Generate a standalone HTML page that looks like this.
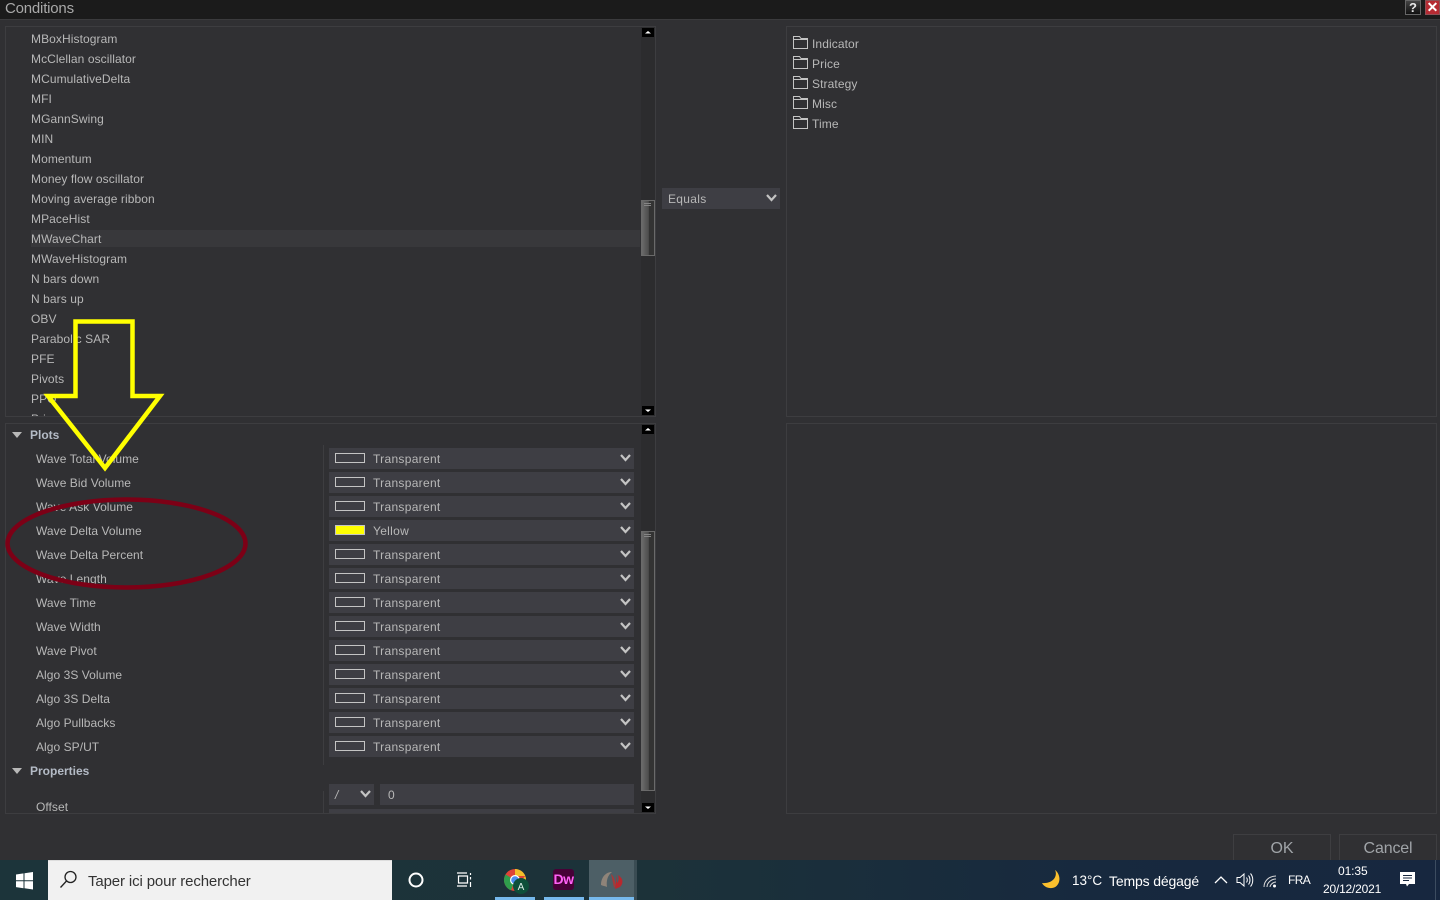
<!DOCTYPE html>
<html><head><meta charset="utf-8"><title>Conditions</title>
<style>
html,body{margin:0;padding:0;width:1440px;height:900px;overflow:hidden;background:#303033}
body{position:relative;font-family:"Liberation Sans",sans-serif;font-size:12px;color:#b8b8b8}
div,span,svg{position:absolute}
.p{border:1px solid #3d3d40;box-sizing:border-box;overflow:hidden;background:#303033}
.l{left:25px;height:20px;line-height:20px;white-space:nowrap;letter-spacing:.08px}
.n{left:30px;height:24px;line-height:24px;white-space:nowrap;letter-spacing:.05px}
.d{left:323px;width:305px;height:21px;background:#3e3e44}
.d span{left:44px;top:1px;line-height:21px;letter-spacing:.3px;white-space:nowrap}
.d i{position:absolute;left:6px;top:5px;width:28px;height:8px;border:1px solid #c4c4c4;display:block}
.d svg{left:291px;top:6px}
.sb{background:#2c2c2e}
.b{background:#000;width:12px;height:9px}
.t{left:812px;height:20px;line-height:20px;white-space:nowrap;letter-spacing:.1px}
.btn{top:834px;height:26px;border:1px solid #3e3e41;border-bottom:0;box-sizing:border-box;text-align:center;line-height:27px;font-size:16px;color:#a0a4a8}
.th{background:linear-gradient(90deg,#6a6a6a,#4d4d4d 55%,#333 60%);border:1px solid #6a6a6a;box-sizing:border-box}
.tb{color:#fff;white-space:nowrap}
</style></head><body>

<div style="left:0;top:0;width:1440px;height:19px;background:#1b1b1b;border-bottom:1px solid #3b3b3d"></div>
<div style="left:5px;top:1px;height:16px;line-height:16px;font-size:15px;color:#a9a9a9;letter-spacing:-.2px">Conditions</div>
<div style="left:1405px;top:0;width:16px;height:15px;background:linear-gradient(#444,#111);border:1px solid #666;box-sizing:border-box;text-align:center;line-height:14px;font-size:13px;font-weight:bold;color:#e8e8e8">?</div>
<div style="left:1425px;top:0;width:15px;height:15px;background:#b52b33;border:1px solid #8c5055;box-sizing:border-box;text-align:center;line-height:13px;font-size:14px;font-weight:bold;color:#fff">✕</div>

<!-- Top-left list -->
<div class="p" style="left:5px;top:26px;width:651px;height:391px">
<div style="left:25px;top:203px;width:609px;height:17px;background:#38383b"></div>
<div class="l" style="top:2px">MBoxHistogram</div>
<div class="l" style="top:22px">McClellan oscillator</div>
<div class="l" style="top:42px">MCumulativeDelta</div>
<div class="l" style="top:62px">MFI</div>
<div class="l" style="top:82px">MGannSwing</div>
<div class="l" style="top:102px">MIN</div>
<div class="l" style="top:122px">Momentum</div>
<div class="l" style="top:142px">Money flow oscillator</div>
<div class="l" style="top:162px">Moving average ribbon</div>
<div class="l" style="top:182px">MPaceHist</div>
<div class="l" style="top:202px">MWaveChart</div>
<div class="l" style="top:222px">MWaveHistogram</div>
<div class="l" style="top:242px">N bars down</div>
<div class="l" style="top:262px">N bars up</div>
<div class="l" style="top:282px">OBV</div>
<div class="l" style="top:302px">Parabolic SAR</div>
<div class="l" style="top:322px">PFE</div>
<div class="l" style="top:342px">Pivots</div>
<div class="l" style="top:362px">PPO</div>
<div class="l" style="top:382px">Price</div>
<div class="sb" style="left:635px;top:0;width:14px;height:389px"></div>
<div class="th" style="left:635px;top:173px;width:14px;height:56px"></div>
<svg width="10" height="6" style="left:637px;top:175px"><path d="M1 1.500H8M1 3.500H8" stroke="#858585"/></svg>
<div class="b" style="left:636px;top:1px"><svg width="12" height="9" style="left:0;top:0"><path d="M3 5.500H9L6 3Z" fill="#fff"/></svg></div>
<div class="b" style="left:636px;top:379px"><svg width="12" height="9" style="left:0;top:0"><path d="M3 3.500H9L6 6Z" fill="#fff"/></svg></div>
</div>

<!-- Bottom-left properties -->
<div class="p" style="left:5px;top:423px;width:651px;height:391px">
<svg width="12" height="8" style="left:6px;top:8px"><path d="M0 0H10L5 6Z" fill="#b8b8b8"/></svg>
<div style="left:24px;top:1px;height:20px;line-height:20px;font-weight:bold;color:#b4bbc6">Plots</div>
<div style="left:317px;top:21px;width:1px;height:320px;background:#3d3d40"></div>
<div style="left:317px;top:367px;width:1px;height:23px;background:#3d3d40"></div>
<div class="n" style="top:23px">Wave Total Volume</div>
<div class="n" style="top:47px">Wave Bid Volume</div>
<div class="n" style="top:71px">Wave Ask Volume</div>
<div class="n" style="top:95px">Wave Delta Volume</div>
<div class="n" style="top:119px">Wave Delta Percent</div>
<div class="n" style="top:143px">Wave Length</div>
<div class="n" style="top:167px">Wave Time</div>
<div class="n" style="top:191px">Wave Width</div>
<div class="n" style="top:215px">Wave Pivot</div>
<div class="n" style="top:239px">Algo 3S Volume</div>
<div class="n" style="top:263px">Algo 3S Delta</div>
<div class="n" style="top:287px">Algo Pullbacks</div>
<div class="n" style="top:311px">Algo SP/UT</div>

<div class="d" style="top:24px"><i></i><span>Transparent</span><svg width="12" height="8"><path d="M1 1L5.500 6L10 1" fill="none" stroke="#c4c4c4" stroke-width="2.200"/></svg></div>
<div class="d" style="top:48px"><i></i><span>Transparent</span><svg width="12" height="8"><path d="M1 1L5.500 6L10 1" fill="none" stroke="#c4c4c4" stroke-width="2.200"/></svg></div>
<div class="d" style="top:72px"><i></i><span>Transparent</span><svg width="12" height="8"><path d="M1 1L5.500 6L10 1" fill="none" stroke="#c4c4c4" stroke-width="2.200"/></svg></div>
<div class="d" style="top:96px"><i style="background:#ff0"></i><span>Yellow</span><svg width="12" height="8"><path d="M1 1L5.500 6L10 1" fill="none" stroke="#c4c4c4" stroke-width="2.200"/></svg></div>
<div class="d" style="top:120px"><i></i><span>Transparent</span><svg width="12" height="8"><path d="M1 1L5.500 6L10 1" fill="none" stroke="#c4c4c4" stroke-width="2.200"/></svg></div>
<div class="d" style="top:144px"><i></i><span>Transparent</span><svg width="12" height="8"><path d="M1 1L5.500 6L10 1" fill="none" stroke="#c4c4c4" stroke-width="2.200"/></svg></div>
<div class="d" style="top:168px"><i></i><span>Transparent</span><svg width="12" height="8"><path d="M1 1L5.500 6L10 1" fill="none" stroke="#c4c4c4" stroke-width="2.200"/></svg></div>
<div class="d" style="top:192px"><i></i><span>Transparent</span><svg width="12" height="8"><path d="M1 1L5.500 6L10 1" fill="none" stroke="#c4c4c4" stroke-width="2.200"/></svg></div>
<div class="d" style="top:216px"><i></i><span>Transparent</span><svg width="12" height="8"><path d="M1 1L5.500 6L10 1" fill="none" stroke="#c4c4c4" stroke-width="2.200"/></svg></div>
<div class="d" style="top:240px"><i></i><span>Transparent</span><svg width="12" height="8"><path d="M1 1L5.500 6L10 1" fill="none" stroke="#c4c4c4" stroke-width="2.200"/></svg></div>
<div class="d" style="top:264px"><i></i><span>Transparent</span><svg width="12" height="8"><path d="M1 1L5.500 6L10 1" fill="none" stroke="#c4c4c4" stroke-width="2.200"/></svg></div>
<div class="d" style="top:288px"><i></i><span>Transparent</span><svg width="12" height="8"><path d="M1 1L5.500 6L10 1" fill="none" stroke="#c4c4c4" stroke-width="2.200"/></svg></div>
<div class="d" style="top:312px"><i></i><span>Transparent</span><svg width="12" height="8"><path d="M1 1L5.500 6L10 1" fill="none" stroke="#c4c4c4" stroke-width="2.200"/></svg></div>

<svg width="12" height="8" style="left:6px;top:344px"><path d="M0 0H10L5 6Z" fill="#b8b8b8"/></svg>
<div style="left:24px;top:337px;height:20px;line-height:20px;font-weight:bold;color:#b4bbc6">Properties</div>
<div class="n" style="top:371px">Offset</div>
<div class="d" style="top:360px;width:45px"><span style="left:6px;font-style:italic">/</span><svg width="12" height="8" style="left:31px"><path d="M1 1L5.500 6L10 1" fill="none" stroke="#c4c4c4" stroke-width="2.200"/></svg></div>
<div class="d" style="left:374px;top:360px;width:254px"><span style="left:8px">0</span></div>
<div class="d" style="top:385px"></div>
<div class="sb" style="left:635px;top:0;width:14px;height:389px"></div>
<div class="th" style="left:635px;top:107px;width:14px;height:260px"></div>
<svg width="10" height="6" style="left:637px;top:109px"><path d="M1 1.500H8M1 3.500H8" stroke="#858585"/></svg>
<div class="b" style="left:636px;top:1px"><svg width="12" height="9" style="left:0;top:0"><path d="M3 5.500H9L6 3Z" fill="#fff"/></svg></div>
<div class="b" style="left:636px;top:379px"><svg width="12" height="9" style="left:0;top:0"><path d="M3 3.500H9L6 6Z" fill="#fff"/></svg></div>
</div>

<!-- Equals -->
<div style="left:662px;top:188px;width:118px;height:21px;background:#3e3e44;line-height:21px"><span style="left:6px;top:1px;letter-spacing:.3px">Equals</span><svg width="12" height="8" style="left:104px;top:6px"><path d="M1 1L5.500 6L10 1" fill="none" stroke="#c4c4c4" stroke-width="2.200"/></svg></div>

<!-- Right panels -->
<div class="p" style="left:786px;top:26px;width:651px;height:391px"></div>
<div class="p" style="left:786px;top:423px;width:651px;height:391px"></div>
<svg width="16" height="100" style="top:36px;left:793px" fill="none" stroke="#c4c4c4">
<path d="M.5 12.500V.5H6.500L8 2.500H14.500V12.500ZM.5 3.500H14.500"/>
<path d="M.5 32.500V20.500H6.500L8 22.500H14.500V32.500ZM.5 23.500H14.500"/>
<path d="M.5 52.500V40.500H6.500L8 42.500H14.500V52.500ZM.5 43.500H14.500"/>
<path d="M.5 72.500V60.500H6.500L8 62.500H14.500V72.500ZM.5 63.500H14.500"/>
<path d="M.5 92.500V80.500H6.500L8 82.500H14.500V92.500ZM.5 83.500H14.500"/>
</svg>
<div class="t" style="top:34px">Indicator</div>
<div class="t" style="top:54px">Price</div>
<div class="t" style="top:74px">Strategy</div>
<div class="t" style="top:94px">Misc</div>
<div class="t" style="top:114px">Time</div>

<!-- Buttons -->
<div class="btn" style="left:1233px;width:98px">OK</div>
<div class="btn" style="left:1339px;width:98px;letter-spacing:-.15px">Cancel</div>

<!-- Annotations -->
<svg width="300" height="300" style="left:0;top:310px;overflow:visible">
<ellipse cx="126.500" cy="233.500" rx="119" ry="44" fill="none" stroke="#7c0016" stroke-width="4.500"/>
<path d="M75.500 11.500H132.500V86H160L105 158L48 86H75.500Z" fill="none" stroke="#ffff00" stroke-width="4.500"/>
</svg>

<!-- Taskbar -->
<div style="left:0;top:860px;width:1440px;height:40px;background:linear-gradient(90deg,#1c343a,#1c3239 45%,#17293e 75%,#17273f)"></div>
<svg width="18" height="18" style="left:16px;top:872px"><path d="M0 2.500L7.500 1.400V8.300H0ZM8.500 1.300L17 0V8.300H8.500ZM0 9.300H7.500V16.200L0 15.100ZM8.500 9.300H17V17.500L8.500 16.300Z" fill="#fff"/></svg>
<div style="left:48px;top:860px;width:344px;height:40px;background:#f1f1f1;border-top:1px solid #ddd;box-sizing:border-box"></div>
<svg width="20" height="20" style="left:59px;top:870px" fill="none" stroke="#222" stroke-width="1.300"><circle cx="11.500" cy="7" r="5.500"/><path d="M7.500 11L1.500 17.500"/></svg>
<div class="tb" style="left:88px;top:872px;height:20px;line-height:20px;font-size:15px;color:#333;letter-spacing:-.13px">Taper ici pour rechercher</div>
<svg width="18" height="18" style="left:407px;top:871px"><circle cx="9" cy="9" r="6.500" fill="none" stroke="#fff" stroke-width="2"/></svg>
<svg width="20" height="18" style="left:455px;top:871px" fill="none" stroke="#fff" stroke-width="1.200"><path d="M2 2H12M2 15H12M3.500 5H12.500V12H3.500V5ZM15.500 2V4M15.500 6V8.500M15.500 11V16"/></svg>

<div style="left:495px;top:897px;width:40px;height:3px;background:#76b9ed"></div>
<svg width="30" height="30" style="left:503px;top:868px">
<circle cx="12" cy="12" r="11" fill="#de4437"/>
<path d="M12 12L2.500 6.500A11 11 0 0 0 8 22.300Z" fill="#2f9e4c"/>
<path d="M12 1A11 11 0 0 1 22.300 8H12Z" fill="#f3bf2a"/>
<path d="M22.300 8A11 11 0 0 1 12 23L17 14Z" fill="#f3bf2a"/>
<circle cx="12" cy="12" r="5" fill="#fff"/><circle cx="12" cy="12" r="3.800" fill="#4d8df0"/>
<circle cx="18" cy="18" r="8" fill="#0e4f3a"/>
<text x="18" y="22" text-anchor="middle" font-family="Liberation Sans" font-size="10" fill="#dfeee9">A</text>
</svg>

<div style="left:544px;top:897px;width:40px;height:3px;background:#76b9ed"></div>
<div style="left:553px;top:869px;width:21px;height:21px;background:#470137;border-radius:3px;text-align:center;line-height:21px;font-weight:bold;font-size:14px;color:#ff61f6;letter-spacing:-.5px">Dw</div>

<div style="left:589px;top:860px;width:45px;height:40px;background:#4d5f66"></div>
<div style="left:634px;top:860px;width:3px;height:40px;background:#3a4c53"></div>
<div style="left:589px;top:897px;width:45px;height:3px;background:#76b9ed"></div>
<svg width="26" height="22" style="left:600px;top:869px">
<path d="M1 16C1 8 6 3 12 3C8 6 6 11 7 18C5 17 3 17 1 16Z" fill="#8f8479"/>
<path d="M11 5C14 7 15 12 16 16L14 19C13 14 12 9 11 5Z" fill="#a33a3a"/>
<path d="M16 5L17 14C19 12 19 9 18 6C23 9 24 14 20 18L15 20L16 14Z" fill="#b8282e"/>
</svg>

<svg width="22" height="22" style="left:1040px;top:869px"><path d="M15 1C18 7 13 15 2 14C5 20 16 22 19 13C20.500 8 18 3 15 1Z" fill="#fbc02d"/></svg>
<div class="tb" style="left:1072px;top:872px;height:18px;line-height:18px;font-size:13.500px">13°C</div>
<div class="tb" style="left:1109px;top:872px;height:18px;line-height:18px;font-size:14px;letter-spacing:-.15px">Temps dégagé</div>
<svg width="14" height="10" style="left:1214px;top:875px"><path d="M1 8L7 2L13 8" fill="none" stroke="#fff" stroke-width="1.300"/></svg>
<svg width="18" height="16" style="left:1236px;top:872px" fill="none" stroke="#fff" stroke-width="1"><path d="M1 5.500H4L8 2V14L4 10.500H1ZM10.500 5.500C11.500 7 11.500 9 10.500 10.500M12.500 3.500C14.500 6 14.500 10 12.500 12.500M14.500 1.500C17.500 5 17.500 11 14.500 14.500"/></svg>
<svg width="16" height="16" style="left:1263px;top:873px" fill="none" stroke="#ddd" stroke-width="1"><path d="M1 14C1 8 6 3 13 3M4 14C4 10 8 6 13 6M7 14C7 12 10 9 13 9"/><circle cx="11.500" cy="13" r="1.500" fill="#fff" stroke="none"/></svg>
<div class="tb" style="left:1288px;top:872px;height:16px;line-height:16px;font-size:12px;letter-spacing:-.6px">FRA</div>
<div class="tb" style="left:1338px;top:863px;height:16px;line-height:16px;font-size:12px;letter-spacing:-.1px">01:35</div>
<div class="tb" style="left:1323px;top:881px;height:16px;line-height:16px;font-size:12px;letter-spacing:-.2px">20/12/2021</div>
<svg width="18" height="18" style="left:1399px;top:871px"><path d="M1 1H16V13H10L8 15.500L7 13H1Z" fill="#fff"/><path d="M4 4.500H13M4 7H13M4 9.500H10" stroke="#17273f" stroke-width="1"/></svg>
<div style="left:1435px;top:860px;width:1px;height:40px;background:#3c4c60"></div>
</body></html>
